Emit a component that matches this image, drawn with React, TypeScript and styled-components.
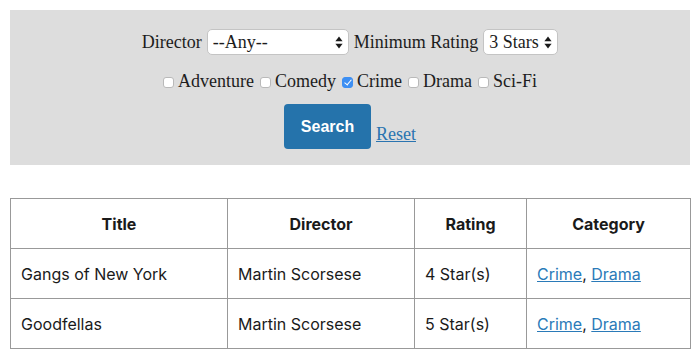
import styled, { createGlobalStyle } from "styled-components";

const GlobalStyle = createGlobalStyle`
  html, body {
    margin: 0;
    padding: 0;
    background: #ffffff;
  }
  * {
    box-sizing: border-box;
  }
`;

type Movie = {
  title: string;
  director: string;
  rating: number;
  categories: string[];
};

const movies: Movie[] = [
  { title: "Gangs of New York", director: "Martin Scorsese", rating: 4, categories: ["Crime", "Drama"] },
  { title: "Goodfellas", director: "Martin Scorsese", rating: 5, categories: ["Crime", "Drama"] },
];

const genres = ["Adventure", "Comedy", "Crime", "Drama", "Sci-Fi"];

const Arrows = () => (
  <svg width="8" height="13" viewBox="0 0 8 13">
    <path d="M4 0.5 L7.6 5.2 L0.4 5.2 Z" fill="#1a1a1a" />
    <path d="M4 12.5 L7.6 7.8 L0.4 7.8 Z" fill="#1a1a1a" />
  </svg>
);

const App = (): JSX.Element => {
  return (
    <Page>
      <GlobalStyle />
      <FilterPanel>
        <FilterRow>
          <Label>Director</Label>
          <SelectWrap $width={142}>
            <Select defaultValue="any">
              <option value="any">--Any--</option>
              <option value="ms">Martin Scorsese</option>
            </Select>
            <ArrowBox>
              <Arrows />
            </ArrowBox>
          </SelectWrap>
          <Label>Minimum Rating</Label>
          <SelectWrap $width={75}>
            <Select defaultValue="3">
              <option value="3">3 Stars</option>
            </Select>
            <ArrowBox>
              <Arrows />
            </ArrowBox>
          </SelectWrap>
        </FilterRow>
        <CheckRow>
          {genres.map((g) => (
            <CheckItem key={g}>
              <Check type="checkbox" defaultChecked={g === "Crime"} />
              <span>{g}</span>
            </CheckItem>
          ))}
        </CheckRow>
        <ActionRow>
          <SearchButton>Search</SearchButton>
          <ResetLink href="#">Reset</ResetLink>
        </ActionRow>
      </FilterPanel>

      <Table>
        <colgroup>
          <col style={{ width: 217 }} />
          <col style={{ width: 187 }} />
          <col style={{ width: 112 }} />
          <col style={{ width: 164 }} />
        </colgroup>
        <thead>
          <tr>
            <Th>Title</Th>
            <Th>Director</Th>
            <Th>Rating</Th>
            <Th>Category</Th>
          </tr>
        </thead>
        <tbody>
          {movies.map((m) => (
            <tr key={m.title}>
              <Td>{m.title}</Td>
              <Td>{m.director}</Td>
              <Td>{m.rating} Star(s)</Td>
              <Td>
                {m.categories.map((c, i) => (
                  <span key={c}>
                    {i > 0 && ", "}
                    <CategoryLink href="#">{c}</CategoryLink>
                  </span>
                ))}
              </Td>
            </tr>
          ))}
        </tbody>
      </Table>
    </Page>
  );
};

const Page = styled.div`
  width: 700px;
  padding: 10px;
  display: flex;
  flex-direction: column;
  gap: 33px;
`;

const FilterPanel = styled.form`
  width: 680px;
  height: 155px;
  background: #dddddd;
  padding: 19px 0 16px 0;
  display: flex;
  flex-direction: column;
  align-items: center;
  font-family: "Liberation Serif", "DejaVu Serif", serif;
  font-size: 18px;
  color: #1c1c1c;
`;

const FilterRow = styled.div`
  display: flex;
  align-items: center;
  gap: 5px;
  height: 26px;
`;

const Label = styled.span`
  line-height: 26px;
`;

const SelectWrap = styled.span<{ $width: number }>`
  position: relative;
  display: inline-block;
  width: ${(p) => p.$width}px;
  height: 26px;
`;

const Select = styled.select`
  appearance: none;
  -webkit-appearance: none;
  width: 100%;
  height: 100%;
  background: #ffffff;
  border: 1px solid #c4c4c4;
  border-radius: 5px;
  padding: 0 18px 0 5px;
  font-family: "Liberation Serif", "DejaVu Serif", serif;
  font-size: 18px;
  color: #1c1c1c;
  outline: none;
`;

const ArrowBox = styled.span`
  position: absolute;
  right: 6px;
  top: 7px;
  display: flex;
  pointer-events: none;
`;

const CheckRow = styled.div`
  display: flex;
  align-items: center;
  gap: 6px;
  margin-top: 15px;
  height: 22px;
`;

const CheckItem = styled.label`
  display: flex;
  align-items: center;
  gap: 4px;
  line-height: 22px;
`;

const Check = styled.input`
  appearance: none;
  -webkit-appearance: none;
  width: 11px;
  height: 11px;
  margin: 3px 0 0 0;
  background: #ffffff;
  border: 1px solid #b9b9b9;
  border-radius: 3px;
  position: relative;

  &:checked {
    background: #3d8ff3;
    border-color: #3d8ff3;
  }

  &:checked::after {
    content: "";
    position: absolute;
    left: 3px;
    top: 0px;
    width: 3px;
    height: 6px;
    border: solid #ffffff;
    border-width: 0 1.5px 1.5px 0;
    transform: rotate(40deg);
  }
`;

const ActionRow = styled.div`
  display: flex;
  align-items: flex-end;
  gap: 5px;
  margin-top: 12px;
`;

const SearchButton = styled.button`
  width: 87px;
  height: 45px;
  background: #2573ab;
  color: #ffffff;
  border: none;
  border-radius: 4px;
  font-family: "Liberation Sans", Arial, sans-serif;
  font-weight: 700;
  font-size: 16px;
  cursor: pointer;
`;

const ResetLink = styled.a`
  color: #2a74b0;
  text-decoration: underline;
  line-height: 22px;
  margin-bottom: 4px;
`;

const Table = styled.table`
  width: 680px;
  border-collapse: collapse;
  table-layout: fixed;
  font-family: Inter, "Noto Sans", sans-serif;
  font-size: 16px;
  color: #1a1a1a;
  border: 1px solid #999999;
`;

const Th = styled.th`
  height: 50px;
  border: 1px solid #999999;
  font-weight: 700;
  text-align: center;
  padding: 0 10px;
`;

const Td = styled.td`
  height: 50px;
  border: 1px solid #999999;
  padding: 0 10px;
  text-align: left;
`;

const CategoryLink = styled.a`
  color: #2a7ab8;
  text-decoration: underline;
`;

export default App;
